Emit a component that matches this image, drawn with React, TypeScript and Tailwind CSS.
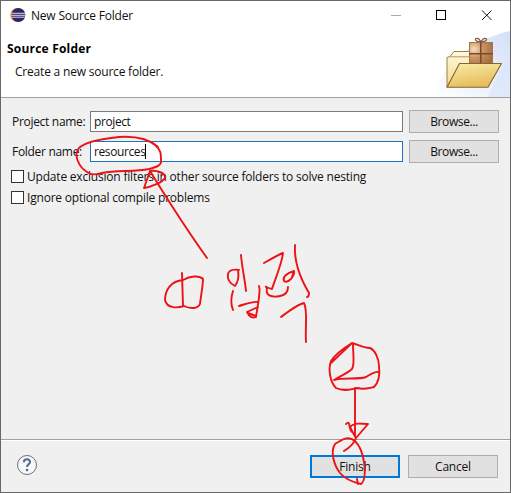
import type { ReactNode } from "react";

function EclipseIcon() {
  return (
    <svg width="16" height="16" viewBox="0 0 16 16" className="shrink-0">
      <circle cx="7" cy="8" r="6.9" fill="#f3a55e" />
      <circle cx="8.4" cy="8" r="7" fill="#2f2561" />
      <path d="M1.5 6.3h13.8M1.2 8.3h14.3M1.5 10.2h13.8" stroke="#dcd9ea" strokeWidth="1" />
    </svg>
  );
}

function FolderBanner() {
  return (
    <svg width="75" height="68" viewBox="435 29 75 68" className="shrink-0">
      <defs>
        <linearGradient id="sky" x1="0" y1="1" x2="1" y2="0">
          <stop offset="0" stopColor="#ffffff" />
          <stop offset="1" stopColor="#ccdaf8" />
        </linearGradient>
        <linearGradient id="front" x1="0" y1="0" x2="0.4" y2="1">
          <stop offset="0" stopColor="#faedae" />
          <stop offset="1" stopColor="#e6bd5a" />
        </linearGradient>
        <linearGradient id="back" x1="0" y1="0" x2="0" y2="1">
          <stop offset="0" stopColor="#fffbe0" />
          <stop offset="1" stopColor="#f2d787" />
        </linearGradient>
        <radialGradient id="box" cx="0.2" cy="0.3" r="0.9">
          <stop offset="0" stopColor="#f6dfc0" />
          <stop offset="0.45" stopColor="#c99260" />
          <stop offset="1" stopColor="#a56c40" />
        </radialGradient>
      </defs>
      <path d="M435 97C440 62 478 38 510 31V97Z" fill="url(#sky)" opacity="0.85" />
      <path d="M488 97C493 82 501 68 510 59V97Z" fill="#dce6fb" opacity="0.7" />
      <path d="M447 87V57.5L450 56.5L454 51.5H470L473 56.5H480V80Z" fill="url(#back)" stroke="#9c8140" strokeWidth="1" strokeLinejoin="round" />
      <path d="M450 56.8H472" stroke="#b79b55" strokeWidth="1" />
      <path d="M481 42C477 42 474 40 476 38.6C478 37.8 480 40 481 42C482 40 484 37.8 486 38.6C488 40 485 42 481 42" fill="none" stroke="#87583a" strokeWidth="1.2" />
      <rect x="469.5" y="42.5" width="23" height="22" fill="url(#box)" stroke="#a87549" />
      <path d="M480.8 42V65M469 53.7H493" stroke="#7e4a2a" strokeWidth="1.6" />
      <path d="M459.5 63.5H501.5L488 87.3H447Z" fill="url(#front)" stroke="#80672f" strokeWidth="1.1" strokeLinejoin="round" />
    </svg>
  );
}

function Button({ children, primary = false }: { children: ReactNode; primary?: boolean }) {
  return (
    <button
      className={
        "flex h-[23px] w-[90px] shrink-0 items-center justify-center bg-[#e1e1e1] " +
        (primary ? "border-2 border-[#0078d7]" : "border border-[#adadad]")
      }
    >
      {children}
    </button>
  );
}

function Field({ label, value, focused = false }: { label: string; value: string; focused?: boolean }) {
  return (
    <div className="flex h-[23px] items-center">
      <label className="w-[79px] shrink-0 whitespace-nowrap pl-px tracking-[-0.3px]">{label}</label>
      <div
        className={
          "flex h-[21px] w-[313px] items-center border bg-white pl-[3px] " +
          (focused ? "border-[#1a74c0]" : "border-[#7a7a7a]")
        }
      >
        <span className="tracking-[-0.4px]">{value}</span>
        {focused && <span className="h-[15px] w-px bg-black" />}
      </div>
      <div className="ml-1.5 tracking-[-0.4px]">
        <Button>Browse...</Button>
      </div>
    </div>
  );
}

function Check({ label }: { label: string }) {
  return (
    <label className="flex h-[21px] items-center gap-[3px] whitespace-nowrap">
      <span className="size-[13px] shrink-0 border border-[#333] bg-white" />
      <span>{label}</span>
    </label>
  );
}

function Ink() {
  return (
    <svg
      className="pointer-events-none absolute -left-px -top-px"
      width="511"
      height="493"
      viewBox="0 0 511 493"
      fill="none"
      stroke="#ed1216"
      strokeWidth="1.9"
      strokeLinecap="round"
      strokeLinejoin="round"
    >
      <path d="M158 147C149 139 134 136 119 137C100 139 85 142 79 148C73 155 79 167 87 172C91 175 96 175 102 173C117 170 134 172 149 169C157 167 162 165 161 160C161 154 161 150 156 146" />
      <path d="M207 258C192 237 169 202 150 171L144 188C151 187 163 182 165 178C166 173 157 170 150 171" />
      <path d="M182 273L183 306M183 280C171 281 165 290 165 300C167 309 178 308 184 306C190 309 198 309 200 304C201 295 203 285 203 279C199 275 190 276 183 280" />
      <path d="M239 270C234 269 229 270 228 274C227 280 231 284 235 286C238 282 239 276 238 270M241 255C242 268 245 280 246 291M233 291C231 297 231 305 233 310M239 306C246 304 253 301 258 302M259 286C261 291 258 303 256 317C252 319 249 316 247 312L258 307M248 313L256 316" />
      <path d="M264 263C271 259 280 254 283 253C282 263 277 274 272 289C267 288 264 285 267 288C265 295 271 298 280 296C286 295 288 291 288 287M294 271C287 273 282 277 284 281C288 284 295 276 294 271L292 277M295 245C294 262 300 278 309 293C309 296 308 297 307 297" />
      <path d="M281 317C289 311 298 304 304 303C308 310 305 326 306 342" />
      <path d="M352 343C344 348 334 356 331 361C328 369 330 382 336 388C344 392 351 389 358 388C363 390 369 388 374 387C379 382 380 374 379 366C379 359 375 350 370 348C362 348 357 344 352 343L331 363M353 345C353 355 355 364 352 369C348 373 340 376 334 380C344 377 358 380 366 377C371 374 375 371 379 372" />
      <path d="M355 388L355 436M355 436L356 438L368 424C361 424 354 422 350 427C352 431 354 435 356 438C354 444 349 448 344 451M346 424C351 419 348 429 352 432" />
      <path d="M355 441C348 435 342 440 335 444C330 452 334 465 340 473C345 479 352 482 361 484C366 480 365 469 364 462C363 455 361 447 355 441M357 479L358 484" />
    </svg>
  );
}

export default function App() {
  return (
    <div className="relative flex h-[493px] w-[511px] flex-col overflow-hidden border border-[#686868] bg-[#f0f0f0] font-['Open_Sans','Noto_Sans_CJK_KR',sans-serif] text-[12px] leading-4 tracking-[-0.2px] text-[#111]">
      <header className="flex h-[96px] shrink-0 flex-col bg-white">
        <div className="flex h-7 shrink-0 items-center pl-[9px]">
          <EclipseIcon />
          <span className="ml-[5px] mt-0.5">New Source Folder</span>
          <svg className="ml-auto mr-4" width="104" height="12" viewBox="0 0 104 12" fill="none" stroke="#111">
            <path d="M1 6.5H11" stroke="#aaa" />
            <rect x="46.5" y="1.5" width="9" height="9" stroke="#000" />
            <path d="M92 1.5L101.5 11M101.5 1.5L92 11" />
          </svg>
        </div>
        <div className="flex h-[68px] justify-between">
          <div className="pl-1.5 pt-3">
            <h1 className="font-bold tracking-[0.2px] text-black">Source Folder</h1>
            <p className="ml-2 mt-[7px]">Create a new source folder.</p>
          </div>
          <FolderBanner />
        </div>
      </header>
      <main className="flex h-[343px] shrink-0 flex-col border-b border-t border-b-[#a0a0a0] border-t-[#a0a0a0] pl-2.5 pt-3">
        <Field label="Project name:" value="project" />
        <div className="h-[7px]" />
        <Field label="Folder name:" value="resources" focused />
        <div className="h-[3px]" />
        <Check label="Update exclusion filters in other source folders to solve nesting" />
        <Check label="Ignore optional compile problems" />
      </main>
      <footer className="flex grow items-center border-t border-white pl-[15px] pr-3">
        <svg className="mb-[3px]" width="22" height="22" viewBox="0 0 22 22" fill="none">
          <circle cx="11" cy="11" r="9.5" fill="#f7f8fa" stroke="#65727f" />
          <path d="M7.8 8.2C8 4.3 14.2 4.4 14 8C14 10.2 11 10.5 11 13" stroke="#526c8b" strokeWidth="2.1" />
          <circle cx="11" cy="16" r="1.3" fill="#526c8b" />
        </svg>
        <div className="ml-auto flex gap-2">
          <Button primary>Finish</Button>
          <Button>Cancel</Button>
        </div>
      </footer>
      <Ink />
    </div>
  );
}
